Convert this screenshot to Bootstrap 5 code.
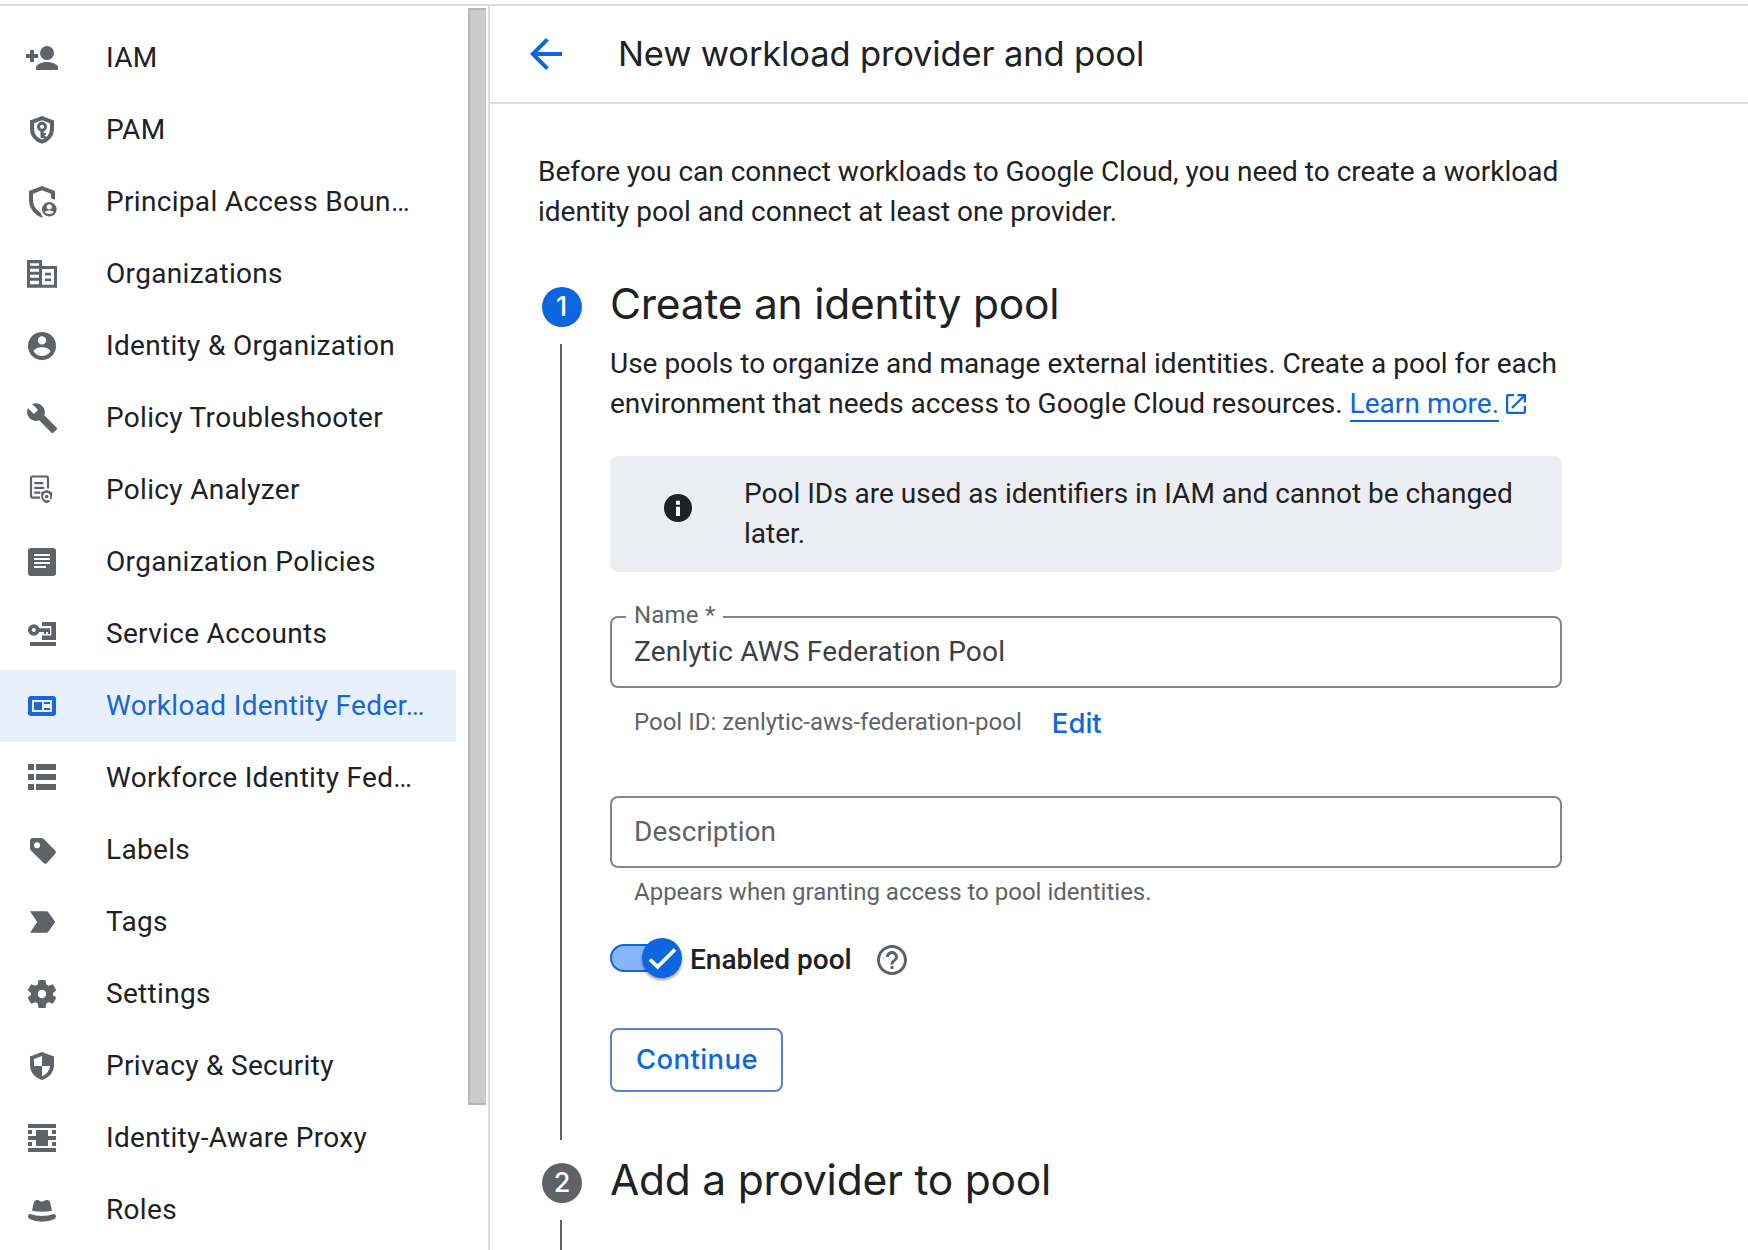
<!DOCTYPE html>
<html lang="en">
<head>
<meta charset="utf-8">
<meta name="viewport" content="width=device-width, initial-scale=1">
<title>New workload provider and pool</title>
<link rel="stylesheet" href="https://cdn.jsdelivr.net/npm/bootstrap@5.3.0/dist/css/bootstrap.min.css">
<style>
  :root { --ink: #202124; --muted: #5f6368; --blue: #0b66e0; --rule: #dadce0; }
  body { height: 1250px; overflow: hidden; font-family: Roboto, "Liberation Sans", sans-serif; font-size: 28px; line-height: 40px; color: var(--ink); background: #fff; }
  svg { display: block; flex: none; }
  .console { margin-top: 4px; height: 1246px; border-top: 2px solid var(--rule); overflow: hidden; }
  .side { width: 490px; border-right: 2px solid var(--rule); }
  .side-nav { width: 456px; padding-top: 16px; margin-right: 12px; letter-spacing: .32px; }
  .side-nav .nav-link { height: 72px; padding: 0 0 0 24px; gap: 46px; color: var(--ink); white-space: nowrap; line-height: 40px; }
  .side-nav .nav-link svg { width: 36px; height: 36px; fill: var(--muted); color: var(--muted); }
  .side-nav .nav-link.active { background: #e8f0fe; color: #1967d2; }
  .side-nav .nav-link.active svg { fill: #1967d2; }
  .scroll-thumb { width: 18px; height: 1097px; margin-top: 2px; background: #cbcbcb; border: solid #b5b5b5; border-width: 2px 0 2px 2px; }
  .title-bar { height: 98px; padding-left: 32px; gap: 48px; border-bottom: 2px solid var(--rule); }
  .title-bar h1 { font: 400 34.5px/96px Inter, sans-serif; letter-spacing: -.14px; }
  .page { padding: 48px 0 0 48px; }
  .intro { width: 1040px; margin-bottom: 44px; }
  .step-open { height: 876px; }
  .step-next { height: 98px; }
  .rail { width: 48px; padding: 11px 0 12px 4px; margin-right: 24px; }
  .step-next .rail { padding-bottom: 0; }
  .step-num { width: 40px; height: 40px; font: 500 27px/40px Inter, sans-serif; color: #fff; background: var(--muted); }
  .step-num.current { padding-right: 1px; background: var(--blue); }
  .step-line { width: 2px; margin: 17px 0 0 18px; background: var(--muted); }
  .step-body { width: 952px; padding-top: 2px; }
  .step-body h2 { font: 400 42.5px/52px Inter, sans-serif; letter-spacing: -.24px; margin: 0 0 14px; }
  .learn { color: var(--blue); text-decoration: none; border-bottom: 2px solid var(--blue); letter-spacing: .05px; }
  .ext { display: inline-block; margin-left: 0; vertical-align: -1px; }
  .notice { height: 116px; margin: 32px 0 44px; padding: 18px 40px 18px 54px; gap: 52px; background: #edeef3; border-radius: 8px; }
  .notice svg { margin-top: 20px; }
  .field .form-control { height: 72px; padding: 0 22px 2px; border: 2px solid #80868b; border-radius: 8px; font-size: 28px; line-height: 40px; letter-spacing: .2px; color: #3c4043; }
  .field .form-control::placeholder { color: var(--muted); letter-spacing: .02px; }
  .field .float-name { top: -17px; left: 16px; width: 97px; padding-left: 8px; font-size: 24px; line-height: 32px; color: var(--muted); background: #fff; letter-spacing: .2px; }
  .hint { font-size: 24px; line-height: 32px; color: var(--muted); }
  .pool-id { height: 40px; margin: 15px 0 53px; padding-left: 24px; gap: 30px; }
  .pool-id .hint { padding-top: 3px; }
  .pool-id .btn { font: 500 27.5px/40px Inter, sans-serif; color: var(--blue); }
  .toggle { width: 72px; height: 40px; }
  .enabled { font-weight: 500; line-height: 44px; margin: 0 22px 0 8px; }
  .switch-row { height: 40px; margin: 30px 0 50px; }
  .btn-continue { width: 173px; height: 64px; border: 2px solid #5583d1; border-radius: 8px; padding: 0 0 2px 1px; font: 500 27.5px/56px Inter, sans-serif; letter-spacing: .38px; color: var(--blue); }
</style>
</head>
<body>
<div class="console d-flex">
  <aside class="side d-flex align-items-start flex-shrink-0 h-100">
    <nav class="side-nav nav flex-column flex-nowrap flex-shrink-0">
      <a class="nav-link d-flex align-items-center" href="#"><svg viewBox="0 0 36 36"><path d="M6 10h4v4h4v4h-4v4H6v-4H2v-4h4z"/><circle cx="23" cy="13" r="7"/><path d="M12 30v-2.500c0-3.700 7.300-5.500 11-5.500s11 1.800 11 5.500V30z"/></svg>IAM</a>
      <a class="nav-link d-flex align-items-center" href="#"><svg viewBox="0 0 36 36"><path d="M18 6.100 8 9.900V17c0 6 4.300 11 10 12.700C23.700 28 28 23 28 17V9.900z" fill="none" stroke="currentColor" stroke-width="4"/><circle cx="18" cy="14.800" r="3.500" fill="none" stroke="currentColor" stroke-width="3"/><path d="M16.500 19h3v2H22v1.800h-1.200v1.400H22V26h-5.500z"/></svg>PAM</a>
      <a class="nav-link d-flex align-items-center" href="#"><svg viewBox="0 0 36 36"><path d="M18 2 5 6.900V16c0 8 5.400 15.500 13.700 17.700l.3-.4A11 11 0 0 1 16.500 28.600C12 26 9 21.300 9 16V9.700l9-3.500 9 3.500v4.700c1.500.2 2.900.7 4 1.500V6.900z"/><path fill-rule="evenodd" d="M25.300 18a7.300 7.300 0 1 0 0 14.600 7.300 7.300 0 0 0 0-14.600zm0 2.200a2.600 2.600 0 1 1 0 5.200 2.600 2.600 0 0 1 0-5.200zm0 9.900c-1.900 0-3.500-.7-4.500-2 .9-1 3-1.500 4.500-1.500s3.600.5 4.500 1.500c-1 1.300-2.600 2-4.500 2z"/></svg>Principal Access Boun…</a>
      <a class="nav-link d-flex align-items-center" href="#"><svg viewBox="0 0 36 36"><path fill-rule="evenodd" d="M3 4h15v6h15v21.700H3zM6 7.200v2.600h9V7.200zm0 5.600v3h9v-3zm0 6v3h9v-3zm0 6v3.400h9v-3.400zM18 13v15.700h12V13z"/><path d="M21 16.700h6v2.600h-6zm0 5.800h6v2.700h-6z"/></svg>Organizations</a>
      <a class="nav-link d-flex align-items-center" href="#"><svg viewBox="0 0 36 36"><path fill-rule="evenodd" d="M18 4a14 14 0 1 0 0 28 14 14 0 0 0 0-28zm0 4.200a4.200 4.200 0 1 1 0 8.400 4.200 4.200 0 0 1 0-8.400zm0 19.900c-3.500 0-6.600-1.800-8.400-4.500 0-2.800 5.600-4.300 8.400-4.300s8.400 1.500 8.400 4.300a10.100 10.100 0 0 1-8.400 4.500z"/></svg>Identity &amp; Organization</a>
      <a class="nav-link d-flex align-items-center" href="#"><svg viewBox="0 0 36 36"><path transform="translate(1.800 1.800) scale(1.360)" d="M22.700 19l-9.100-9.100c.9-2.300.4-5-1.500-6.900-2-2-5-2.400-7.400-1.300L9 6 6 9 1.600 4.700C.4 7.100.9 10.100 2.900 12.100c1.900 1.900 4.600 2.400 6.900 1.500l9.100 9.100c.4.4 1 .4 1.400 0l2.300-2.300c.5-.4.5-1.100.1-1.400z"/></svg>Policy Troubleshooter</a>
      <a class="nav-link d-flex align-items-center" href="#"><svg viewBox="0 0 36 36"><path d="M16 25.600H8.500A1.500 1.500 0 0 1 7 24.100V6a1.500 1.500 0 0 1 1.500-1.500h14A1.500 1.500 0 0 1 24 6v10.500" fill="none" stroke="currentColor" stroke-width="2.200"/><path d="M10.300 10h9v2.200h-9zm0 4.700h10v2.200h-10zm0 4.800h6v2.200h-6z"/><path fill-rule="evenodd" d="M22.700 18 17.200 20.200v4c0 3.200 2.300 6 5.500 6.900 3.100-.9 5.400-3.700 5.400-6.900v-4zm0 2.800a3.700 3.700 0 0 1 3.100 5.700l1.300 1.400-1.300 1.200-1.300-1.400a3.700 3.700 0 1 1-1.800-6.900z"/><circle cx="22.700" cy="24.500" r="1.800"/></svg>Policy Analyzer</a>
      <a class="nav-link d-flex align-items-center" href="#"><svg viewBox="0 0 36 36"><path fill-rule="evenodd" d="M7 4h22a3 3 0 0 1 3 3v22a3 3 0 0 1-3 3H7a3 3 0 0 1-3-3V7a3 3 0 0 1 3-3zm3 6v2h16v-2zm0 4v2h16v-2zm0 4v2h16v-2zm0 4v2h12v-2z"/></svg>Organization Policies</a>
      <a class="nav-link d-flex align-items-center" href="#"><svg viewBox="0 0 36 36"><path d="M18 6h14v18H18v-4.500h9.300V10H18z"/><path d="M6 26h26v4H6z"/><circle cx="9.800" cy="14" r="3.900" fill="none" stroke="currentColor" stroke-width="3.800"/><path d="M14.500 12.200H26V18h-2.200v-2H22v2h-2v-2h-5.500z"/></svg>Service Accounts</a>
      <a class="nav-link active d-flex align-items-center" href="#"><svg viewBox="0 0 36 36"><path fill-rule="evenodd" d="M7 8h22a3 3 0 0 1 3 3v14a3 3 0 0 1-3 3H7a3 3 0 0 1-3-3V11a3 3 0 0 1 3-3zm1 4v12h20V12z"/><path d="M10 14h8v8h-8zm10 0h6v2h-6zm0 6h6v2h-6z"/></svg>Workload Identity Feder…</a>
      <a class="nav-link d-flex align-items-center" href="#"><svg viewBox="0 0 36 36"><path d="M4 4h6v6H4zm8 0h20v6H12zM4 14h6v6H4zm8 0h20v6H12zM4 24h6v6H4zm8 0h20v6H12z"/></svg>Workforce Identity Fed…</a>
      <a class="nav-link d-flex align-items-center" href="#"><svg viewBox="0 0 36 36"><path fill-rule="evenodd" d="M9 6h8.500q1.300 0 2.200.9L31.200 18.400q1.600 1.700 0 3.300l-8.200 9.200q-1.700 1.600-3.400 0L6.900 18.500Q6 17.600 6 16.300V9q0-3 3-3zm4 4.300a3 3 0 1 0 0 6 3 3 0 0 0 0-6z"/></svg>Labels</a>
      <a class="nav-link d-flex align-items-center" href="#"><svg viewBox="0 0 36 36"><path d="M6 7.200h16.300q1.200 0 2 1L31.300 18l-7 9.800q-.8 1-2 1H6L13.200 18z"/></svg>Tags</a>
      <a class="nav-link d-flex align-items-center" href="#"><svg viewBox="0 0 36 36"><path fill-rule="evenodd" d="M14.600 4h6.800l.9 4.500 2.300 1.300 4.300-1.500 3.400 5.900L29 17.100v1.800l3.300 2.900-3.400 5.900-4.300-1.500-2.300 1.300-.9 4.500h-6.800l-.9-4.500-2.300-1.300-4.300 1.500-3.400-5.900L7 18.900v-1.800l-3.300-2.900 3.400-5.900 4.300 1.500 2.300-1.300zM18 13.800a4.200 4.200 0 1 0 0 8.400 4.200 4.200 0 0 0 0-8.400z"/></svg>Settings</a>
      <a class="nav-link d-flex align-items-center" href="#"><svg viewBox="0 0 36 36"><path fill-rule="evenodd" d="M18 4 6 8.400V17c0 7 5 13 12 15 7-2 12-8 12-15V8.400zm0 4v10h8c-.4 4.400-3.500 8.600-8 10.200V18h-8v-6.900z"/></svg>Privacy &amp; Security</a>
      <a class="nav-link d-flex align-items-center" href="#"><svg viewBox="0 0 36 36"><path d="M4 4h28v4H4zm0 24h28v4H4zm8-18h12v16H12zm-8 6h28v4H4zm0-6h4v4H4zm24 0h4v4h-4zM4 22h4v4H4zm24 0h4v4h-4z"/></svg>Identity-Aware Proxy</a>
      <a class="nav-link d-flex align-items-center" href="#"><svg viewBox="0 0 36 36"><path d="M9.800 10.500Q10.400 8 12.600 8h.8q1.600 0 2.400.9 2.200 1 4.400 0 .8-.9 2.400-.9h.8q2.200 0 2.800 2.500L28 18.800q-10 1.800-20 0z"/><path d="M6.300 22q5.500 2 11.700 2t11.700-2q2.300 0 2.300 2.200 0 1.800-1.600 2.700-5.700 2.800-12.400 2.800T5.600 26.900Q4 26 4 24.200 4 22 6.300 22z"/></svg>Roles</a>
    </nav>
    <div class="scroll-thumb flex-shrink-0"></div>
  </aside>

  <main class="flex-grow-1">
    <header class="title-bar d-flex align-items-center">
      <a href="#" aria-label="Back"><svg width="48" height="48" viewBox="0 0 24 24" fill="#0b66e0"><path d="M20 11H7.830l5.590-5.590L12 4l-8 8 8 8 1.410-1.410L7.830 13H20z"/></svg></a>
      <h1 class="m-0">New workload provider and pool</h1>
    </header>

    <div class="page">
      <p class="intro">Before you can connect workloads to Google Cloud, you need to create a workload identity pool and connect at least one provider.</p>

      <section class="step-open d-flex">
        <div class="rail d-flex flex-column flex-shrink-0">
          <span class="step-num current rounded-circle text-center">1</span>
          <span class="step-line flex-grow-1"></span>
        </div>
        <div class="step-body">
          <h2>Create an identity pool</h2>
          <p class="m-0">Use pools to organize and manage external identities. Create a pool for each environment that needs access to Google Cloud resources. <a class="learn" href="#">Learn more.</a> <svg class="ext" width="20" height="20" viewBox="0 0 20 20" fill="none" stroke="#0b66e0" stroke-width="2.200"><path d="M8 1.100H2.100q-1 0-1 1v15.800q0 1 1 1h15.800q1 0 1-1V12"/><path d="M11.500 1.100h7.400v7.400M18.500 1.500 6 14"/></svg></p>

          <div class="notice d-flex align-items-start">
            <svg width="28" height="28" viewBox="0 0 28 28"><circle cx="14" cy="14" r="14" fill="#202124"/><path d="M12 6.700h4v4h-4zm0 6h4v9.300h-4z" fill="#fff"/></svg>
            <div>Pool IDs are used as identifiers in IAM and cannot be changed later.</div>
          </div>

          <div class="field position-relative">
            <input id="pool-name" class="form-control" type="text" value="Zenlytic AWS Federation Pool">
            <label for="pool-name" class="float-name position-absolute">Name *</label>
          </div>
          <div class="pool-id d-flex align-items-start">
            <span class="hint">Pool ID: zenlytic-aws-federation-pool</span>
            <button type="button" class="btn border-0 p-0">Edit</button>
          </div>

          <div class="field">
            <input class="form-control" type="text" placeholder="Description">
            <div class="hint mt-2 ms-4">Appears when granting access to pool identities.</div>
          </div>

          <div class="switch-row d-flex align-items-start">
            <svg class="toggle overflow-visible" viewBox="0 0 72 40"><defs><filter id="lift" x="-30%" y="-30%" width="160%" height="170%"><feDropShadow dx="0" dy="2" stdDeviation="1.600" flood-color="#000" flood-opacity=".4"/></filter></defs><rect x="1" y="7" width="60" height="26" rx="13" fill="#8ab4f8" stroke="#0b66e0" stroke-width="2"/><circle cx="52" cy="20" r="20" fill="#0b66e0" filter="url(#lift)"/><path d="m40 21.500 7.600 7.300L65 11.500" fill="none" stroke="#fff" stroke-width="3.800"/></svg>
            <span class="enabled">Enabled pool</span>
            <svg class="mt-1" width="36" height="36" viewBox="0 0 24 24" fill="#5f6368"><path d="M11 18h2v-2h-2v2zm1-16C6.480 2 2 6.480 2 12s4.480 10 10 10 10-4.480 10-10S17.520 2 12 2zm0 18c-4.410 0-8-3.590-8-8s3.590-8 8-8 8 3.590 8 8-3.590 8-8 8zm0-14c-2.210 0-4 1.790-4 4h2c0-1.100.9-2 2-2s2 .9 2 2c0 2-3 1.750-3 5h2c0-2.250 3-2.500 3-5 0-2.210-1.790-4-4-4z"/></svg>
          </div>

          <button type="button" class="btn btn-continue">Continue</button>
        </div>
      </section>

      <section class="step-next d-flex">
        <div class="rail d-flex flex-column flex-shrink-0">
          <span class="step-num rounded-circle text-center">2</span>
          <span class="step-line flex-grow-1"></span>
        </div>
        <div class="step-body">
          <h2>Add a provider to pool</h2>
        </div>
      </section>
    </div>
  </main>
</div>
<script src="https://cdn.jsdelivr.net/npm/bootstrap@5.3.0/dist/js/bootstrap.bundle.min.js"></script>
</body>
</html>
